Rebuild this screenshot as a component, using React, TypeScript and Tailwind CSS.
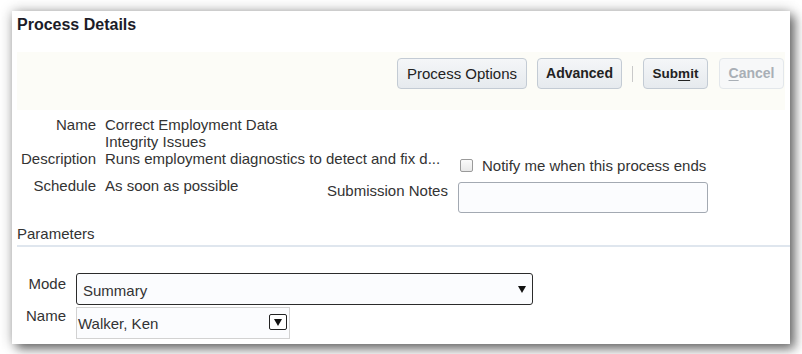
const font = "font-['Liberation_Sans',Arial,sans-serif]";

function Btn({
  children,
  width,
  disabled,
  className = "",
}: {
  children: React.ReactNode;
  width: string;
  disabled?: boolean;
  className?: string;
}) {
  return (
    <div
      className={`flex h-[31px] ${width} items-center justify-center rounded-[4px] border ${
        disabled
          ? "border-[#e3e7eb] bg-[#f7f8f9] text-[#a9afb6]"
          : "border-[#c3cbd4] bg-gradient-to-b from-[#f4f6f8] to-[#e6eaee] text-[#222]"
      } ${className}`}
    >
      {children}
    </div>
  );
}

function Triangle({ className = "" }: { className?: string }) {
  return (
    <svg width="8" height="7" viewBox="0 0 8 7" className={className}>
      <path d="M0 0 L8 0 L4 7 Z" fill="#111" />
    </svg>
  );
}

export default function App() {
  return (
    <div className={`h-[354px] w-[802px] overflow-hidden bg-white pl-[12px] pt-[11px] ${font}`}>
      <div className="h-[333px] w-[778px] bg-white text-[15px] leading-[17px] text-[#333] shadow-[5px_5px_10px_rgba(0,0,0,0.5),0_0_12px_rgba(0,0,0,0.28)]">
        {/* header */}
        <div className="h-[41px] pl-[5px] pt-[4px] text-[16px] font-bold leading-[20px] text-[#1c1c28]">
          Process Details
        </div>

        {/* toolbar */}
        <div className="mx-[5px] flex h-[58px] items-start justify-end gap-[10px] bg-[#fcfcf7] pr-[1px] pt-[6px]">
          <Btn width="w-[130px]">Process Options</Btn>
          <Btn width="w-[85px]" className="text-[14px] font-bold">
            Advanced
          </Btn>
          <div className="mt-[8px] h-[16px] w-px bg-[#c9c9c9]" />
          <div className="flex gap-[11px]">
            <Btn width="w-[65px]" className="text-[13.5px] font-bold">
              <span>
                Sub<span className="underline underline-offset-2">m</span>it
              </span>
            </Btn>
            <Btn width="w-[65px]" disabled className="text-[14px] font-bold">
              <span>
                <span className="underline underline-offset-2">C</span>ancel
              </span>
            </Btn>
          </div>
        </div>

        {/* process form */}
        <div className="pl-[5px] pt-[6px]">
          <div className="flex">
            <div className="w-[79px] text-right">Name</div>
            <div className="ml-[9px]">
              Correct Employment Data
              <br />
              Integrity Issues
            </div>
          </div>

          <div className="flex items-start">
            <div className="w-[79px] text-right">Description</div>
            <div className="ml-[9px] w-[355px] whitespace-nowrap">
              Runs employment diagnostics to detect and fix d...
            </div>
            <div className="mt-[7px] flex items-center gap-[9px]">
              <div className="h-[13px] w-[13px] rounded-[2px] border border-[#9a9a9a] bg-gradient-to-b from-[#fafafa] to-[#e8e8e8]" />
              <span>Notify me when this process ends</span>
            </div>
          </div>

          <div className="mt-[3px] flex items-start">
            <div className="w-[79px] text-right">Schedule</div>
            <div className="ml-[9px] w-[222px] whitespace-nowrap">As soon as possible</div>
            <div className="mt-[5px] w-[120px] whitespace-nowrap text-right">Submission Notes</div>
            <div className="ml-[11px] mt-[5px] h-[31px] w-[250px] rounded-[3px] border border-[#a3a9b2] bg-[#fbfcfe]" />
          </div>
        </div>

        {/* parameters */}
        <div className="ml-[5px] mt-[12px] border-b-2 border-[#dfe6ee] pb-[3px]">Parameters</div>

        <div className="pl-[5px] pt-[26px]">
          <div className="flex items-start">
            <div className="w-[49px] pt-[2px] text-right">Mode</div>
            <div className="ml-[10px] flex h-[32px] w-[457px] items-start justify-between rounded-[3px] border border-[#2b2b2b] bg-[#fbfcfe] pl-[6px] pr-[6px] pt-[8px]">
              <span>Summary</span>
              <Triangle className="mt-[4px]" />
            </div>
          </div>

          <div className="mt-[2px] flex items-start">
            <div className="w-[49px] text-right">Name</div>
            <div className="ml-[10px] flex h-[32px] w-[214px] items-start justify-between border border-[#d2d2d2] bg-[#fbfcfe] pl-[1px] pr-[2px] pt-[7px]">
              <span>Walker, Ken</span>
              <div className="-mt-[1px] flex h-[16px] w-[18px] items-center justify-center rounded-[2px] border-[1.5px] border-[#222] bg-white">
                <Triangle />
              </div>
            </div>
          </div>
        </div>
      </div>
    </div>
  );
}
